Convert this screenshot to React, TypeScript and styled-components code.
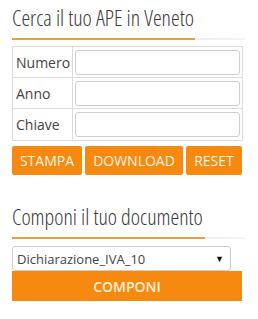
import React from "react";
import styled, { createGlobalStyle } from "styled-components";

const Global = createGlobalStyle`
  html, body { margin: 0; padding: 0; background: #fff; }
  body { font-family: "Open Sans", "Liberation Sans", sans-serif; color: #444; }
  * { box-sizing: border-box; }
`;

const Page = styled.div`
  width: 258px;
  padding: 0 15px 0 12px;
  display: flex;
  flex-direction: column;
`;

const Section = styled.section<{ $top: number }>`
  display: flex;
  flex-direction: column;
  padding-top: ${(p) => p.$top}px;
`;

const Heading = styled.h2`
  margin: 0;
  font-family: "Open Sans", sans-serif;
  font-stretch: 75%;
  font-weight: 300;
  font-size: 22px;
  line-height: 26px;
  color: #3a3a3a;
`;

const Rule = styled.div<{ $accent: number; $after: number }>`
  height: 2px;
  margin: 8px 0 ${(p) => p.$after}px;
  width: 233px;
  background: linear-gradient(
    to right,
    #e2a33a 0,
    #e2a33a ${(p) => p.$accent}px,
    #eeeeee ${(p) => p.$accent}px,
    #f4f4f4 100%
  );
`;

const Table = styled.div`
  display: grid;
  grid-template-columns: 60px 1fr;
  width: 231px;
  border: 1px solid #dcdcdc;
`;

const LabelCell = styled.div<{ $last?: boolean }>`
  display: flex;
  align-items: center;
  height: 31px;
  padding-left: 3px;
  font-size: 14px;
  color: #444;
  border-right: 1px solid #dcdcdc;
  border-bottom: ${(p) => (p.$last ? "none" : "1px solid #dcdcdc")};
`;

const InputCell = styled.div<{ $last?: boolean }>`
  display: flex;
  align-items: center;
  height: 31px;
  padding: 0 2px 0 2px;
  border-bottom: ${(p) => (p.$last ? "none" : "1px solid #dcdcdc")};
`;

const TextInput = styled.input`
  width: 100%;
  height: 25px;
  border: 1px solid #cfcfcf;
  border-radius: 3px;
  background: #fff;
  outline: none;
  font-family: inherit;
`;

const ButtonRow = styled.div`
  display: flex;
  gap: 3px;
  margin-top: 5px;
  width: 231px;
`;

const OrangeButton = styled.button<{ $w: number }>`
  width: ${(p) => p.$w}px;
  height: 29px;
  border: none;
  border-radius: 2px;
  background: #f68a10;
  color: #fff5e6;
  font-family: "Open Sans", sans-serif;
  font-size: 14px;
  padding: 0;
  text-align: center;
`;

const Select = styled.div`
  display: flex;
  align-items: center;
  justify-content: space-between;
  width: 219px;
  height: 25px;
  border: 1px solid #cdcdcd;
  border-radius: 3px;
  padding: 0 6px 0 4px;
  font-size: 13px;
  color: #444;
`;

const Caret = styled.span`
  font-size: 9px;
  color: #111;
`;

const WideButton = styled.button`
  width: 230px;
  height: 30px;
  border: none;
  background: #f68a10;
  color: #fff3dd;
  font-family: "Open Sans", sans-serif;
  font-size: 14px;
  font-weight: 600;
  padding: 0;
`;

const rows = ["Numero", "Anno", "Chiave"];

export default function App() {
  return (
    <>
      <Global />
      <Page>
        <Section $top={4}>
          <Heading>Cerca il tuo APE in Veneto</Heading>
          <Rule $accent={183} $after={6} />
          <Table>
            {rows.map((r, i) => (
              <React.Fragment key={r}>
                <LabelCell $last={i === rows.length - 1}>{r}</LabelCell>
                <InputCell $last={i === rows.length - 1}>
                  <TextInput />
                </InputCell>
              </React.Fragment>
            ))}
          </Table>
          <ButtonRow>
            <OrangeButton $w={70}>STAMPA</OrangeButton>
            <OrangeButton $w={98}>DOWNLOAD</OrangeButton>
            <OrangeButton $w={56}>RESET</OrangeButton>
          </ButtonRow>
        </Section>
        <Section $top={28}>
          <Heading>Componi il tuo documento</Heading>
          <Rule $accent={193} $after={7} />
          <Select>
            <span>Dichiarazione_IVA_10</span>
            <Caret>▼</Caret>
          </Select>
          <WideButton>COMPONI</WideButton>
        </Section>
      </Page>
    </>
  );
}
